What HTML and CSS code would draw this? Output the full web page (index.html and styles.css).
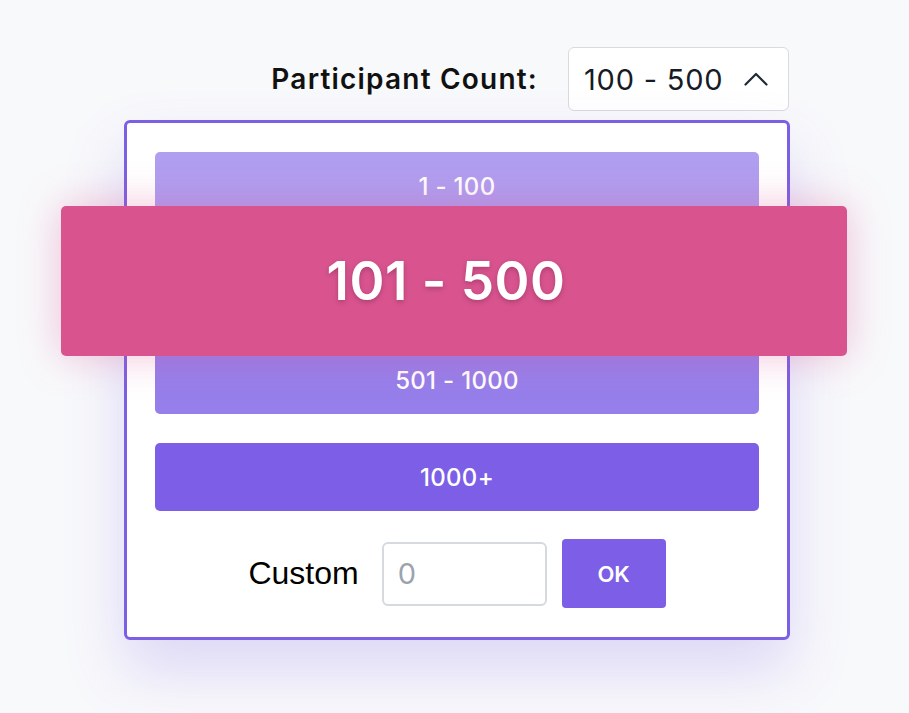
FILE: index.html
```html
<!DOCTYPE html>
<html lang="en">
<head>
  <meta charset="UTF-8" />
  <meta name="viewport" content="width=device-width, initial-scale=1.0"/>
  <title>Participant Count</title>
  <link rel="stylesheet" href="styles.css">
</head>
<body>
  <div class="picker">
    <div class="picker-head">
      <label class="picker-label">Participant Count:</label>
      <button class="picker-select" type="button">
        <span>100 - 500</span>
        <svg width="24" height="14" viewBox="0 0 24 14" fill="none" stroke="#1f2937" stroke-width="2.2" stroke-linecap="round" stroke-linejoin="round"><path d="M1.5 12.5 L12 2 L22.5 12.5"/></svg>
      </button>
    </div>

    <div class="panel">
      <div class="option o-60">1 - 100</div>
      <!-- hovered option: label is shown in the enlarged pop -->
      <div class="option o-70 active">
        <div class="active-pop">101 - 500</div>
      </div>
      <div class="option o-80">501 - 1000</div>
      <div class="option">1000+</div>

      <div class="custom-row">
        <span class="custom-label">Custom</span>
        <input type="text" class="custom-input" placeholder="0" />
        <button type="button" class="ok-btn">OK</button>
      </div>
    </div>
  </div>
</body>
</html>
```

FILE: styles.css
```css
body {
  margin: 0;
  background-color: #f8f9fb;
  font-family: Inter, "Noto Sans", sans-serif;
  height: 713px;
  overflow: hidden;
}
.picker {
  width: 666px;
  margin: 47px 0 0 124px;
}
.picker-head {
  display: flex;
  justify-content: flex-end;
  align-items: center;
  gap: 30px;
  margin-right: 1px;
}
.picker-label {
  font-size: 28px;
  font-weight: 600;
  letter-spacing: 1.2px;
  color: #111;
}
.picker-select {
  width: 221px;
  height: 64px;
  display: flex;
  align-items: center;
  justify-content: space-between;
  padding: 0 20px 0 15px;
  background: #fff;
  border: 1px solid #d8dbe0;
  border-radius: 6px;
  font-family: Inter, sans-serif;
  font-size: 29px;
  letter-spacing: 0.8px;
  color: #161b26;
  box-sizing: border-box;
}
.panel {
  position: relative;
  margin-top: 9px;
  background: #fff;
  border: 3px solid #7b5fe5;
  border-radius: 6px;
  padding: 29px 28px 29px;
  display: flex;
  flex-direction: column;
  gap: 29px;
  box-shadow: 0 30px 60px rgba(124, 95, 230, 0.22);
}
.option {
  position: relative;
  height: 68px;
  display: flex;
  align-items: center;
  justify-content: center;
  background: #7c5fe6;
  color: #fff;
  border-radius: 5px;
  font-size: 24px;
  font-weight: 500;
  letter-spacing: 0.3px;
}
.o-60 { background: #b09ef0; }
.o-70 { background: #a38ff0; }
.o-80 { background: #967feb; }
.active-pop {
  position: absolute;
  left: -94px;
  top: -43px;
  width: 786px;
  height: 150px;
  box-sizing: border-box;
  padding-right: 16px;
  display: flex;
  align-items: center;
  justify-content: center;
  background: #d9548f;
  border-radius: 5px;
  font-size: 53px;
  font-weight: 600;
  letter-spacing: 0.5px;
  color: #fff;
  text-shadow: 0 2px 5px rgba(90, 20, 50, 0.35);
  box-shadow: 0 0 40px rgba(217, 84, 143, 0.35);
  z-index: 2;
}
.custom-row {
  display: flex;
  align-items: center;
  justify-content: center;
  margin-top: -1px;
}
.custom-label {
  font-family: "Liberation Sans", Arial, sans-serif;
  font-size: 32px;
  color: #000;
  margin-right: 23px;
}
.custom-input {
  width: 165px;
  height: 64px;
  box-sizing: border-box;
  border: 2px solid #d6d9de;
  border-radius: 6px;
  padding: 0 14px;
  font-family: Inter, sans-serif;
  font-size: 29px;
  margin-right: 15px;
}
.custom-input::placeholder {
  color: #9ca3af;
}
.ok-btn {
  width: 104px;
  height: 69px;
  border: none;
  border-radius: 4px;
  background: #7c5fe6;
  color: #fff;
  font-family: Inter, sans-serif;
  font-size: 22px;
  font-weight: 600;
}
```
